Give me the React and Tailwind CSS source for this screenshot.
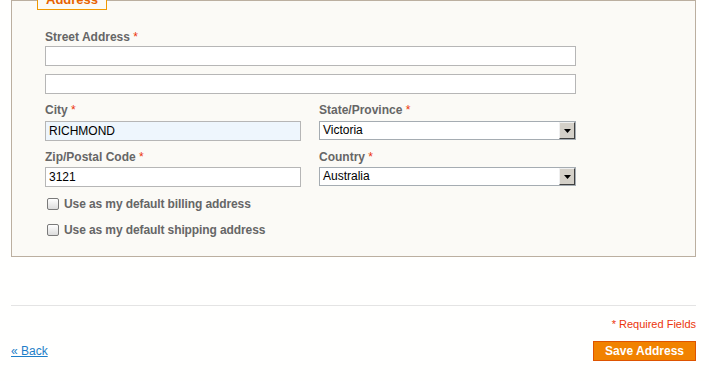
import React from 'react';

const Req = () => <span className="text-[#eb340a] font-normal"> *</span>;

const Label = ({ children }) => (
  <div className="text-[12px] leading-[15px] font-bold text-[#666]">
    {children}
    <Req />
  </div>
);

const TextBox = ({ value = '', className = '' }) => (
  <div
    className={`h-[20px] border border-[#b6b6b6] px-[3px] text-[12px] leading-[18px] text-black ${className}`}
  >
    {value}
  </div>
);

const FakeSelect = ({ value }) => (
  <div className="flex h-[19px] w-[257px] border border-[#a5acb2] bg-white">
    <div className="flex-1 px-[3px] text-[12px] leading-[17px] text-black">{value}</div>
    <div className="flex w-[16px] items-center justify-center border border-t-[#f0f0f0] border-l-[#f0f0f0] border-r-[#404040] border-b-[#404040] bg-[#d4d0c8]">
      <svg width="7" height="4" viewBox="0 0 7 4">
        <path d="M0 0h7L3.5 4z" fill="#000" />
      </svg>
    </div>
  </div>
);

const Check = ({ label }) => (
  <div className="flex h-[18px] items-center gap-[5px] pl-[2px]">
    <div className="h-[12px] w-[12px] rounded-[2px] border border-[#7a7a7a] bg-gradient-to-b from-white to-[#dcdcdc]" />
    <span className="text-[12px] font-bold tracking-[-0.1px] text-[#666]">{label}</span>
  </div>
);

export default function App() {
  return (
    <div className="min-h-[381px] bg-[#fffffe] pl-[11px] pr-[13px] font-['Liberation_Sans',Arial,sans-serif]">
      <div className="relative h-[257px] border border-[#bbafa0] bg-[#fbfaf6] pl-[33px] pt-[29px]">
        <div className="absolute left-[25px] top-[-11px] h-[20px] border border-[#f19900] bg-[#fbfaf6] px-[8px] text-[13px] font-bold leading-[18px] text-[#e76200]">
          Address
        </div>

        <Label>Street Address</Label>
        <TextBox className="mt-[1px] w-[531px] bg-white" />
        <TextBox className="mt-[8px] w-[531px] bg-white" />

        <div className="mt-[9px] flex gap-[18px]">
          <div className="w-[256px]">
            <Label>City</Label>
            <TextBox value="RICHMOND" className="mt-[3px] bg-[#eef6fd]" />
            <div className="mt-[9px]">
              <Label>Zip/Postal Code</Label>
            </div>
            <TextBox value="3121" className="mt-[2px] bg-white" />
          </div>
          <div className="w-[257px]">
            <Label>State/Province</Label>
            <div className="mt-[3px]">
              <FakeSelect value="Victoria" />
            </div>
            <div className="mt-[10px]">
              <Label>Country</Label>
            </div>
            <div className="mt-[2px]">
              <FakeSelect value="Australia" />
            </div>
          </div>
        </div>

        <div className="mt-[8px] flex flex-col gap-[8px]">
          <Check label="Use as my default billing address" />
          <Check label="Use as my default shipping address" />
        </div>
      </div>

      <div className="mt-[48px] border-t border-[#e4e4e4] pt-[11px]">
        <div className="text-right text-[11px] leading-[14px] text-[#eb340a]">* Required Fields</div>
        <div className="mt-[10px] flex items-center justify-between">
          <a href="#" className="text-[12px] text-[#1e7ec8] underline">« Back</a>
          <button className="h-[20px] border border-[#de5400] bg-[#f18200] px-[11px] text-[12px] font-bold leading-[18px] text-white">
            Save Address
          </button>
        </div>
      </div>
    </div>
  );
}
